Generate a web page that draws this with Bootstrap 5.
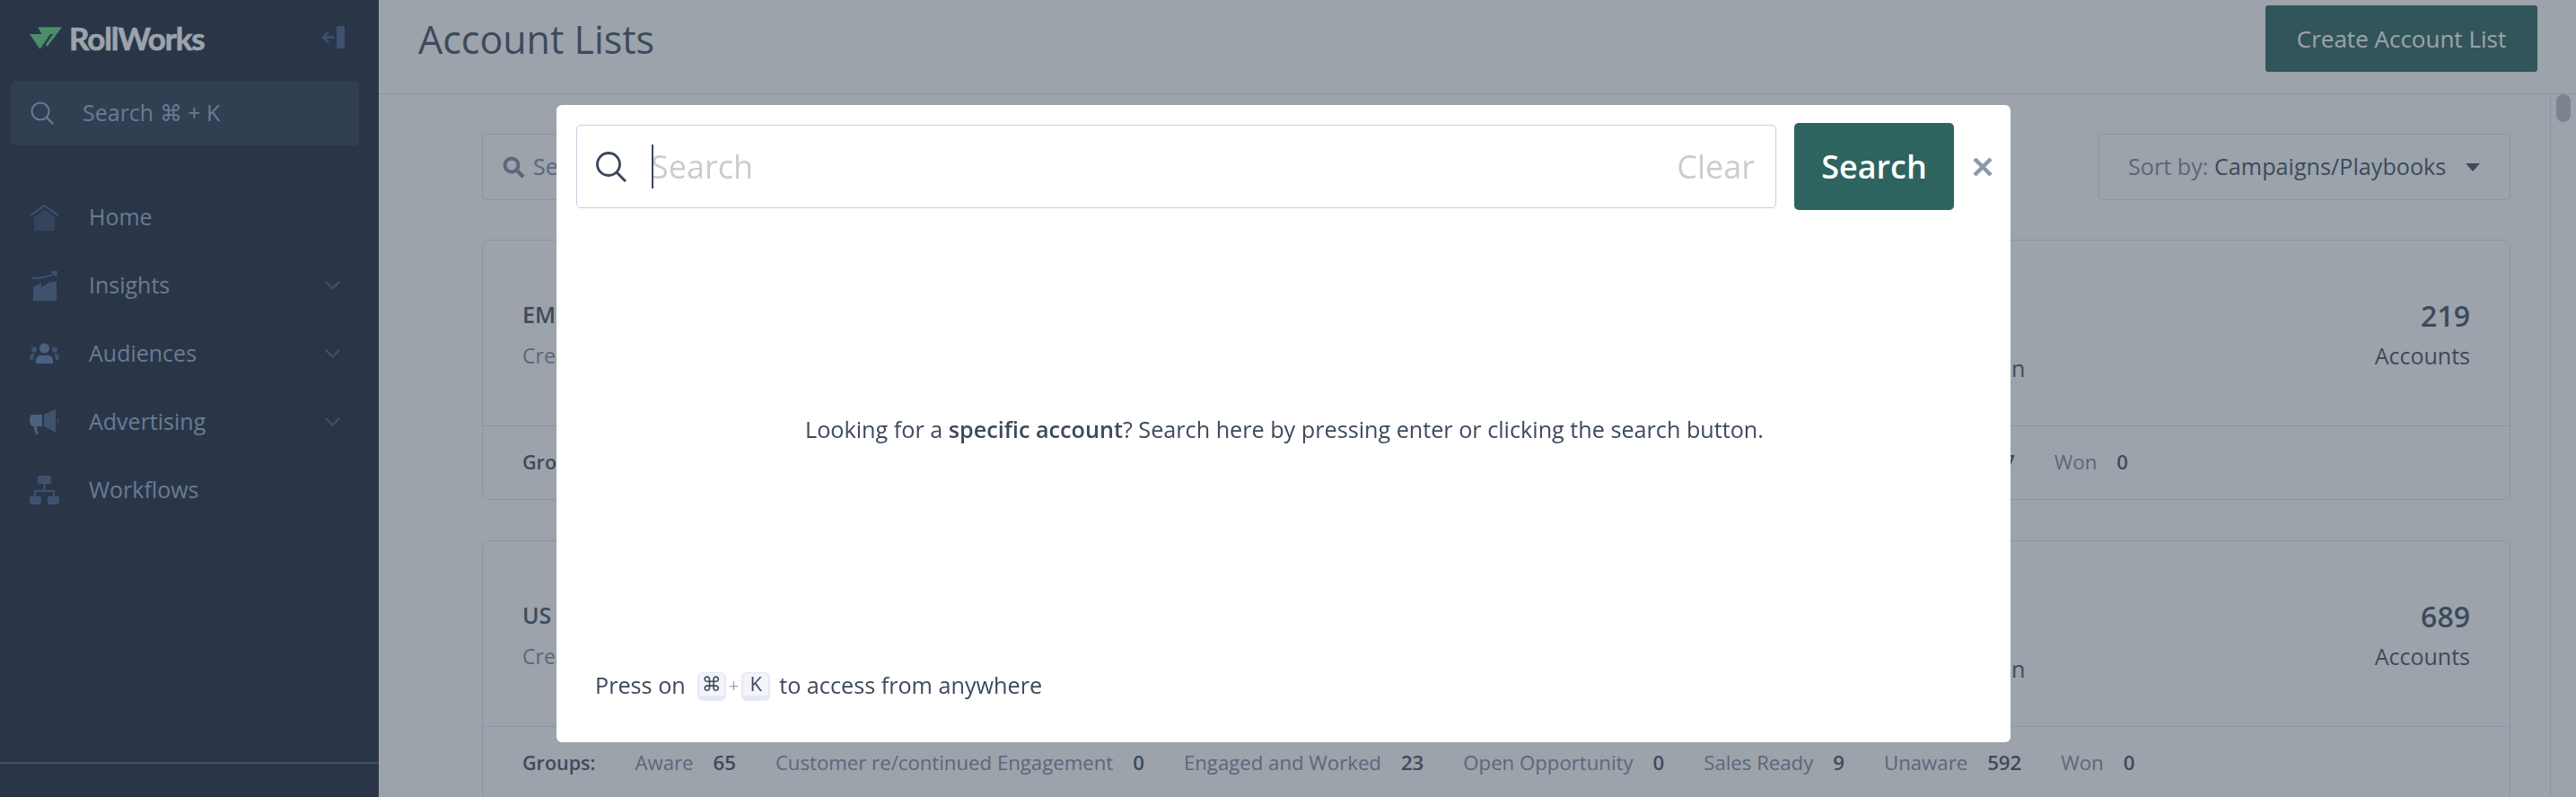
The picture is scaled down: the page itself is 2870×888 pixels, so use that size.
<!DOCTYPE html>
<html lang="en">
<head>
<meta charset="utf-8">
<title>Account Lists</title>
<link href="https://cdn.jsdelivr.net/npm/bootstrap@5.3.0/dist/css/bootstrap.min.css" rel="stylesheet">
<script src="https://cdn.jsdelivr.net/npm/bootstrap@5.3.0/dist/js/bootstrap.bundle.min.js"></script>
<style>
html,body{height:100%;overflow:hidden}
body{font-family:"Open Sans","Liberation Sans",sans-serif;font-size:25px;color:#414d61;background:#fff}
.rw-shell{height:888px;overflow:hidden}
.rw-side{width:422px;flex:none;background:#1b2539;color:#99adcf;height:888px;position:relative}
.rw-brand{height:90px;padding:29px 37px 0 33px}
.rw-logo-text{font-family:"Lato","Open Sans",sans-serif;font-weight:700;font-size:35px;line-height:27px;letter-spacing:-1.1px;color:#fff;margin-left:8px;-webkit-text-stroke:.6px #fff}
.rw-side-search{margin:0 22px 0 12px;height:72px;background:#2b354d;border-radius:6px;padding-left:22px;color:#99adcf}
.rw-side-search span{margin-left:32px;font-size:25px}
.rw-nav{margin-top:42px;list-style:none;padding:0}
.rw-nav li{height:76px;padding:0 43px 0 33px;font-size:25px}
.rw-nav .rw-ic{width:33px;flex:none;display:flex;justify-content:center}
.rw-nav .rw-label{margin-left:33px;flex:1}
.rw-side-rule{position:absolute;left:0;right:0;top:849px;border-top:2px solid #435a7d}
.rw-main{flex:1;min-width:0}
.rw-head{height:105px;border-bottom:1px solid #dde1ef;padding:0 43px 0 44px}
.rw-title{font-size:43px;font-weight:400;margin:0 0 16px;line-height:1.2}
.rw-create{width:303px;height:74px;margin-bottom:18px;background:#2b635d;border:0;border-radius:3px;color:#fff;font-size:26px;font-weight:500;padding:0}
.rw-body{height:783px;overflow:hidden}
.rw-scroll{flex:1;padding:44px 44px 0 115px;min-width:0}
.rw-track{width:29px;flex:none;border-left:1px solid #dde1ef;padding:0 6px 0 6px}
.rw-thumb{width:16px;height:31px;border-radius:8px;background:#bdc2ca}
.rw-tool{height:74px;margin-bottom:44px}
.rw-find{width:400px;border:1px solid #dde1ef;border-radius:4px;padding-left:22px;color:#7f879d;font-size:25px}
.rw-find span{margin-left:9px}
.rw-sort{width:459px;border:1px solid #dde1ef;border-radius:4px;padding-left:32px;font-size:25.2px}
.rw-sort .rw-mute{color:#7f879d}
.rw-caret{width:0;height:0;border-left:8px solid transparent;border-right:8px solid transparent;border-top:9px solid #414d61;margin-left:22px}
.rw-card{border:1px solid #dde1ef;border-radius:8px;margin-bottom:45px;background:#fff}
.rw-top{height:206px;padding:0 44px;position:relative}
.rw-name{font-size:25px;font-weight:600;line-height:36px}
.rw-sub{font-size:23px;color:#7f879d;line-height:36px;margin-top:10px}
.rw-end{position:absolute;left:1703px;top:124px;font-size:25px;line-height:36px}
.rw-stat{margin-top:2px}
.rw-count{font-size:32px;font-weight:600;line-height:44px;text-align:right}
.rw-acc{font-size:25px;line-height:36px;text-align:right;margin-top:4px}
.rw-foot{height:82px;border-top:1px solid #dde1ef;padding:0 44px 1px;font-size:22.2px;white-space:nowrap}
.rw-group{font-size:21.5px;font-weight:600;margin-right:44px}
.rw-k{color:#7f879d;font-weight:500}
.rw-v{font-weight:600;margin:0 44px 0 22px}
.rw-spacer{width:381px;flex:none}
.rw-veil{position:fixed;inset:0;background:rgba(57,71,87,.5)}
.rw-modal.modal{display:block;z-index:1060;overflow:hidden}
.rw-modal .modal-dialog{max-width:1620px;width:1620px;margin:117px 0 0 620px}
.rw-modal .modal-content{height:710px;border:0;border-radius:6px;padding:20px 20px 0 22px;display:flex;flex-direction:column}
.rw-input{width:1337px;flex:none;height:93px;border:1px solid #c5cede;border-radius:5px;padding:0 23px 0 21px;position:relative}
.rw-ph{font-size:36px;color:#ccc;margin-left:27px;line-height:50px}
.rw-cursor{position:absolute;left:83px;top:21px;width:2px;height:49px;background:#3a475c}
.rw-clear{margin-left:auto;font-size:36px;color:#ccc}
.rw-go{width:178px;flex:none;height:97px;margin-left:20px;background:#2d645f;color:#fff;border:0;border-radius:5px;font-size:36px;font-weight:600;padding:0}
.rw-x{background:none;border:0;padding:0;margin-left:21px;width:22px;flex:none;height:22px;line-height:0}
.rw-msg{height:0;flex:1;font-size:25.2px;color:#3d4a5c;padding-bottom:21px}
.rw-msg strong{font-weight:600}
.rw-tip{padding:0 0 45px 21px;font-size:25.2px;color:#3d4a5c;line-height:36px}
.rw-key{display:inline-block;width:32px;height:32px;line-height:22px;text-align:center;font-family:"Open Sans","DejaVu Sans",sans-serif;font-size:22px;font-weight:500;background:#f2f4f9;border:solid #e4e9f3;border-width:1px 2px 6px;border-radius:6px;color:#3d4a5c;vertical-align:middle;box-sizing:border-box;position:relative;top:-1px}
.rw-plus{color:#9aa4b6;font-size:20px;margin:0 3px;vertical-align:2px}
.rw-keys{margin:0 10px 0 13px}
</style>
</head>
<body>
<div class="rw-shell d-flex">
  <aside class="rw-side">
    <div class="rw-brand d-flex align-items-start justify-content-between">
      <div class="d-flex align-items-center">
        <svg width="36" height="25" viewBox="0 0 106 72" aria-hidden="true"><path fill="#5dd17b" d="M0 23h68L34 72z"/><path fill="#5dd17b" d="M27 0h79L58 63l-6-6 25-34H40z"/></svg>
        <span class="rw-logo-text">RollWorks</span>
      </div>
      <svg width="27" height="25" viewBox="0 0 27 25" aria-hidden="true"><rect x="17" y="0" width="9" height="25" rx="1.5" fill="#435d89"/><path d="M14 12.5H2M8 6.5l-6 6 6 6" fill="none" stroke="#435d89" stroke-width="2.4"/></svg>
    </div>
    <div class="rw-side-search d-flex align-items-center">
      <svg width="26" height="26" viewBox="0 0 26 26" aria-hidden="true"><circle cx="11" cy="11" r="9.5" fill="none" stroke="#99adcf" stroke-width="2"/><path d="M18 18l7 7" stroke="#99adcf" stroke-width="2.4"/></svg>
      <span>Search ⌘ + K</span>
    </div>
    <ul class="rw-nav">
      <li class="d-flex align-items-center"><span class="rw-ic"><svg width="33" height="30" viewBox="0 0 33 30" aria-hidden="true"><path d="M1 13L16.500 2 32 13" fill="none" stroke="#435d89" stroke-width="2"/><path d="M5 14.500L16.500 7 28 14.500V30H5z" fill="#304064"/></svg></span><span class="rw-label">Home</span></li>
      <li class="d-flex align-items-center"><span class="rw-ic"><svg width="30" height="33" viewBox="0 0 30 33" aria-hidden="true"><path d="M1 8c10 0 18-1 26-6M22 1l6 0-1 5" fill="none" stroke="#435d89" stroke-width="1.800"/><path d="M2 18l9-5v5l9-5v-1h8v21H2z" fill="#435d89"/></svg></span><span class="rw-label">Insights</span><svg width="17" height="10" viewBox="0 0 17 10" aria-hidden="true"><path d="M1 1l7.500 7.500L16 1" fill="none" stroke="#435d89" stroke-width="2"/></svg></li>
      <li class="d-flex align-items-center"><span class="rw-ic"><svg width="33" height="24" viewBox="0 0 33 24" aria-hidden="true"><circle cx="16.500" cy="6" r="5.500" fill="#5b7ba8"/><path d="M7 23v-3c0-4 3-6 6-6h7c3 0 6 2 6 6v3z" fill="#5b7ba8"/><circle cx="5" cy="7.500" r="3" fill="#435d89"/><circle cx="28" cy="7.500" r="3" fill="#435d89"/><path d="M0 17c0-4 2-5 6-5-1 1-2 3-2 7H1zM33 17c0-4-2-5-6-5 1 1 2 3 2 7h3z" fill="#435d89"/></svg></span><span class="rw-label">Audiences</span><svg width="17" height="10" viewBox="0 0 17 10" aria-hidden="true"><path d="M1 1l7.500 7.500L16 1" fill="none" stroke="#435d89" stroke-width="2"/></svg></li>
      <li class="d-flex align-items-center"><span class="rw-ic"><svg width="33" height="29" viewBox="0 0 33 29" aria-hidden="true"><path d="M2 6h12v13H8v3l2 6H7l-2-6-0-3C2 19 0 17 0 12.500 0 9 1 7 2 6z" fill="#5b7ba8"/><path d="M16 6l13-6v26l-13-7zM31 10c2 1 2 5 0 6z" fill="#435d89"/></svg></span><span class="rw-label">Advertising</span><svg width="17" height="10" viewBox="0 0 17 10" aria-hidden="true"><path d="M1 1l7.500 7.500L16 1" fill="none" stroke="#435d89" stroke-width="2"/></svg></li>
      <li class="d-flex align-items-center"><span class="rw-ic"><svg width="33" height="32" viewBox="0 0 33 32" aria-hidden="true"><rect x="9" y="0" width="15" height="9" rx="2" fill="#435d89"/><path d="M16.500 9v7M6 23v-6h21v6" fill="none" stroke="#435d89" stroke-width="2.200"/><rect x="0" y="23" width="13" height="9" rx="2" fill="#435d89"/><rect x="20" y="23" width="13" height="9" rx="2" fill="#435d89"/></svg></span><span class="rw-label">Workflows</span></li>
    </ul>
    <div class="rw-side-rule"></div>
  </aside>
  <main class="rw-main">
    <header class="rw-head d-flex align-items-center justify-content-between">
      <h1 class="rw-title">Account Lists</h1>
      <button type="button" class="btn rw-create">Create Account List</button>
    </header>
    <div class="rw-body d-flex">
      <div class="rw-scroll">
        <div class="rw-tool d-flex justify-content-between">
          <div class="rw-find d-flex align-items-center"><svg width="25" height="25" viewBox="0 0 25 25" aria-hidden="true"><circle cx="10" cy="10" r="7.500" fill="none" stroke="#7f879d" stroke-width="4"/><path d="M16 16l7 7" stroke="#7f879d" stroke-width="4.500"/></svg><span>Se</span></div>
          <div class="rw-sort d-flex align-items-center"><span class="rw-mute">Sort by:&nbsp;</span><span>Campaigns/Playbooks</span><span class="rw-caret"></span></div>
        </div>
        <section class="rw-card">
          <div class="rw-top d-flex align-items-center justify-content-between">
            <div class="mt-1"><div class="rw-name">EM</div><div class="rw-sub">Crea</div></div>
            <div class="rw-end">n</div>
            <div class="rw-stat"><div class="rw-count">219</div><div class="rw-acc">Accounts</div></div>
          </div>
          <div class="rw-foot d-flex align-items-center"><span class="rw-group flex-grow-1">Gro</span><span class="rw-v ms-0">7</span><span class="rw-k">Won</span><span class="rw-v me-0">0</span><span class="rw-spacer"></span></div>
        </section>
        <section class="rw-card">
          <div class="rw-top d-flex align-items-center justify-content-between">
            <div class="mt-1"><div class="rw-name">US</div><div class="rw-sub">Crea</div></div>
            <div class="rw-end">n</div>
            <div class="rw-stat"><div class="rw-count">689</div><div class="rw-acc">Accounts</div></div>
          </div>
          <div class="rw-foot d-flex align-items-center">
            <span class="rw-group">Groups:</span>
            <span class="rw-k">Aware</span><span class="rw-v">65</span>
            <span class="rw-k">Customer re/continued Engagement</span><span class="rw-v">0</span>
            <span class="rw-k">Engaged and Worked</span><span class="rw-v">23</span>
            <span class="rw-k">Open Opportunity</span><span class="rw-v">0</span>
            <span class="rw-k">Sales Ready</span><span class="rw-v">9</span>
            <span class="rw-k">Unaware</span><span class="rw-v">592</span>
            <span class="rw-k">Won</span><span class="rw-v me-0">0</span>
          </div>
        </section>
      </div>
      <div class="rw-track"><div class="rw-thumb"></div></div>
    </div>
  </main>
</div>
<div class="rw-veil"></div>
<div class="modal rw-modal" tabindex="-1" role="dialog">
  <div class="modal-dialog">
    <div class="modal-content">
      <div class="d-flex align-items-center">
        <div class="rw-input d-flex align-items-center">
          <svg width="34" height="34" viewBox="0 0 34 34" aria-hidden="true"><circle cx="14" cy="14" r="12.500" fill="none" stroke="#3a475c" stroke-width="2.800"/><path d="M23 23l10 10" stroke="#3a475c" stroke-width="3"/></svg>
          <span class="rw-ph">Search</span><span class="rw-cursor"></span>
          <span class="rw-clear">Clear</span>
        </div>
        <button type="button" class="btn rw-go">Search</button>
        <button type="button" class="rw-x" aria-label="Close"><svg width="22" height="22" viewBox="0 0 22 22" aria-hidden="true"><path d="M2 2l18 18M20 2L2 20" stroke="#8f97ad" stroke-width="4.500"/></svg></button>
      </div>
      <div class="rw-msg d-flex align-items-center justify-content-center"><div>Looking for a <strong>specific account</strong>? Search here by pressing enter or clicking the search button.</div></div>
      <div class="rw-tip">Press on<span class="rw-keys"><kbd class="rw-key p-0">⌘</kbd><span class="rw-plus">+</span><kbd class="rw-key p-0">K</kbd></span>to access from anywhere</div>
    </div>
  </div>
</div>
</body>
</html>
